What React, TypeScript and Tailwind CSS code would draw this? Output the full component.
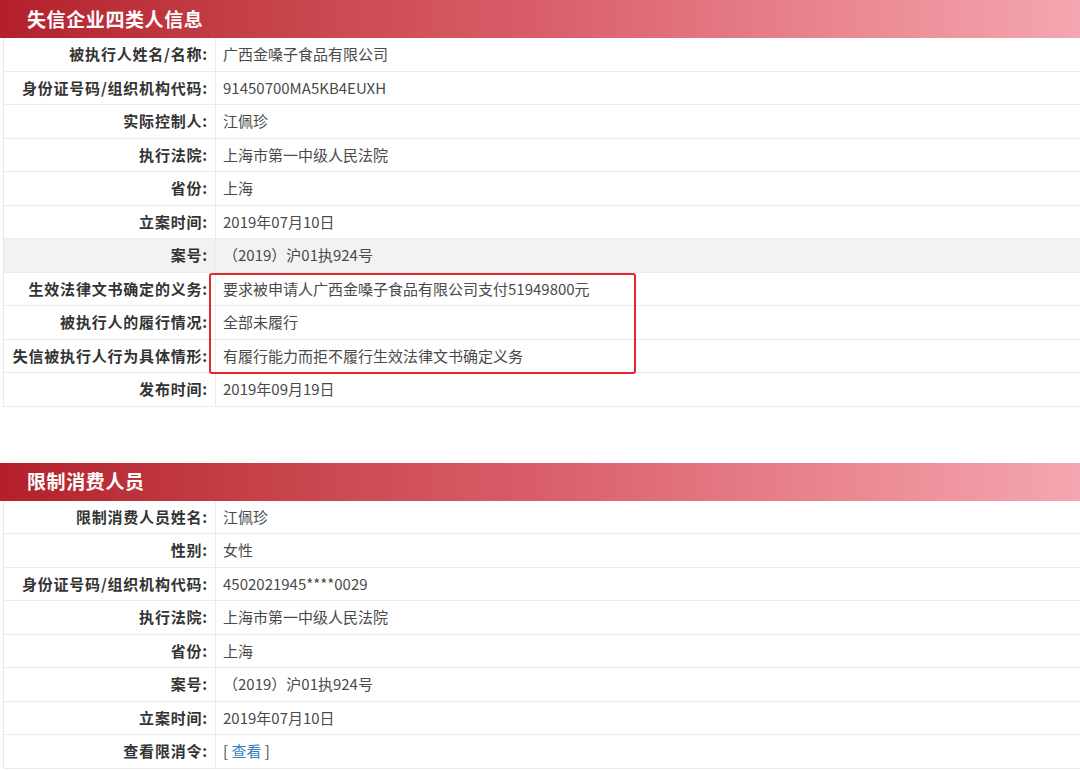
import React from "react";

const dishonest = [
  { label: "被执行人姓名/名称:", value: "广西金嗓子食品有限公司" },
  { label: "身份证号码/组织机构代码:", value: "91450700MA5KB4EUXH" },
  { label: "实际控制人:", value: "江佩珍" },
  { label: "执行法院:", value: "上海市第一中级人民法院" },
  { label: "省份:", value: "上海" },
  { label: "立案时间:", value: "2019年07月10日" },
  { label: "案号:", value: "（2019）沪01执924号", shaded: true },
  { label: "生效法律文书确定的义务:", value: "要求被申请人广西金嗓子食品有限公司支付51949800元" },
  { label: "被执行人的履行情况:", value: "全部未履行" },
  { label: "失信被执行人行为具体情形:", value: "有履行能力而拒不履行生效法律文书确定义务" },
  { label: "发布时间:", value: "2019年09月19日" },
];

const restricted = [
  { label: "限制消费人员姓名:", value: "江佩珍" },
  { label: "性别:", value: "女性" },
  { label: "身份证号码/组织机构代码:", value: "4502021945****0029" },
  { label: "执行法院:", value: "上海市第一中级人民法院" },
  { label: "省份:", value: "上海" },
  { label: "案号:", value: "（2019）沪01执924号" },
  { label: "立案时间:", value: "2019年07月10日" },
  { label: "查看限消令:", value: "link" },
];

type Row = { label: string; value: string; shaded?: boolean };

function Header({ title }: { title: string }) {
  return (
    <div className="h-[38px] flex items-center pl-[27px] bg-gradient-to-r from-[#b31f2b] via-[#d95e6a] to-[#f5a6b0]">
      <h2 className="text-[19px] font-bold text-white tracking-[0.6px]">{title}</h2>
    </div>
  );
}

function InfoTable({ rows }: { rows: Row[] }) {
  return (
    <div className="ml-[3px] border-l border-[#e8e8e8]">
      {rows.map((row, i) => (
        <div
          key={i}
          className={`grid grid-cols-[212px_1fr] h-[33.5px] border-b border-[#ebebeb] ${
            row.shaded ? "bg-[#f2f2f2]" : "bg-white"
          }`}
        >
          <div className="flex items-center justify-end pr-[7px] border-r border-[#ebebeb] font-bold text-[#333] whitespace-nowrap tracking-[0.8px]">
            {row.label}
          </div>
          <div className="flex items-center pl-[7px] text-[#4a4a4a]">
            {row.value === "link" ? (
              <span>
                [ <span className="text-[#3b7fc4]">查看</span> ]
              </span>
            ) : (
              row.value
            )}
          </div>
        </div>
      ))}
    </div>
  );
}

export default function App() {
  return (
    <div
      className="w-[1080px] h-[770px] overflow-hidden bg-white text-[15px]"
      style={{ fontFamily: '"Noto Sans CJK SC", "Noto Sans", sans-serif' }}
    >
      <section className="relative">
        <Header title="失信企业四类人信息" />
        <InfoTable rows={dishonest} />
        <div className="absolute left-[209px] top-[273px] w-[427px] h-[101px] border-2 border-[#e3262e] rounded-[3px]"></div>
      </section>
      <section className="mt-[56px]">
        <Header title="限制消费人员" />
        <InfoTable rows={restricted} />
      </section>
    </div>
  );
}
